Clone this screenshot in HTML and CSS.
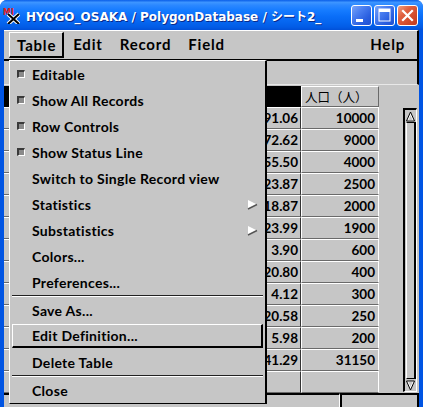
FILE: index.html
```html
<!DOCTYPE html>
<html>
<head>
<meta charset="utf-8">
<link rel="stylesheet" href="styles.css">
</head>
<body>
<div class="window">
  <div class="titlebar">
    <svg class="appicon" width="17" height="17" viewBox="0 0 17 17">
      <text x="0" y="8" class="icontext">MI</text>
      <path d="M5 7 L16 17 M16 7 L5 17" stroke="#fff" stroke-width="4" fill="none"/>
      <path d="M5 7 L16 17 M16 7 L5 17" stroke="#000" stroke-width="2" fill="none"/>
    </svg>
    <span class="title">HYOGO_OSAKA / PolygonDatabase / シート2_</span>
    <div class="tbtns">
      <span class="tbtn blue"><svg width="21" height="21" viewBox="0 0 21 21"><rect x="5" y="14" width="7" height="3" fill="#fff"/></svg></span>
      <span class="tbtn blue"><svg width="21" height="21" viewBox="0 0 21 21"><rect x="5" y="4" width="11" height="12" fill="none" stroke="#fff" stroke-width="1"/><rect x="5" y="4" width="11" height="3" fill="#fff"/></svg></span>
      <span class="tbtn red"><svg width="21" height="21" viewBox="0 0 21 21"><path d="M6 6 L15 15 M15 6 L6 15" stroke="#fff" stroke-width="2.2" stroke-linecap="square"/></svg></span>
    </div>
  </div>
  <div class="client">
    <div class="menubar">
      <span class="mitem active">Table</span>
      <span class="mitem">Edit</span>
      <span class="mitem">Record</span>
      <span class="mitem">Field</span>
      <span class="mitem help">Help</span>
    </div>
    <div class="field"></div>
    <div class="tablearea">
      <div class="grid">
        <div class="row head"><div class="c1 sel"></div><div class="c2 hcell">人口（人）</div></div>
        <div class="row"><div class="c1">91.06</div><div class="c2">10000</div></div>
        <div class="row"><div class="c1">72.62</div><div class="c2">9000</div></div>
        <div class="row"><div class="c1">55.50</div><div class="c2">4000</div></div>
        <div class="row"><div class="c1">23.87</div><div class="c2">2500</div></div>
        <div class="row"><div class="c1">18.87</div><div class="c2">2000</div></div>
        <div class="row"><div class="c1">23.99</div><div class="c2">1900</div></div>
        <div class="row"><div class="c1">3.90</div><div class="c2">600</div></div>
        <div class="row"><div class="c1">20.80</div><div class="c2">400</div></div>
        <div class="row"><div class="c1">4.12</div><div class="c2">300</div></div>
        <div class="row"><div class="c1">20.58</div><div class="c2">250</div></div>
        <div class="row"><div class="c1">5.98</div><div class="c2">200</div></div>
        <div class="row"><div class="c1">41.29</div><div class="c2">31150</div></div>
        <div class="row"><div class="c1"></div><div class="c2"></div></div>
      </div>
      <div class="scroll">
        <div class="sbtn"><svg width="9" height="11" viewBox="0 0 9 11"><path d="M4.5 1 L8.5 10 L0.5 10 Z" fill="#fff" stroke="#000" stroke-width="1"/><path d="M4.5 4 L6.5 9 L2.5 9 Z" fill="#c6c6c6"/></svg></div>
        <div class="strack"></div>
        <div class="sbtn"><svg width="9" height="11" viewBox="0 0 9 11"><path d="M0.5 1 L8.5 1 L4.5 10 Z" fill="#fff" stroke="#000" stroke-width="1"/><path d="M2.5 2 L6.5 2 L4.5 7 Z" fill="#c6c6c6"/></svg></div>
      </div>
    </div>
    <div class="status"><div class="pane p1"></div><div class="pane p2"></div></div>

    <div class="dropdown">
      <div class="ditem"><span class="ind"></span>Editable</div>
      <div class="ditem"><span class="ind"></span>Show All Records</div>
      <div class="ditem"><span class="ind"></span>Row Controls</div>
      <div class="ditem"><span class="ind"></span>Show Status Line</div>
      <div class="ditem plain">Switch to Single Record view</div>
      <div class="ditem plain sub">Statistics<svg class="arrow" width="11" height="11" viewBox="0 0 11 11"><path d="M1 1 L10 5.5 L1 10 Z" fill="#fff"/><path d="M10 5.5 L1 10" stroke="#555" stroke-width="1.4"/></svg></div>
      <div class="ditem plain sub">Substatistics<svg class="arrow" width="11" height="11" viewBox="0 0 11 11"><path d="M1 1 L10 5.5 L1 10 Z" fill="#fff"/><path d="M10 5.5 L1 10" stroke="#555" stroke-width="1.4"/></svg></div>
      <div class="ditem plain">Colors...</div>
      <div class="ditem plain">Preferences...</div>
      <div class="sep"></div>
      <div class="ditem plain">Save As...</div>
      <div class="ditem plain hl"><span class="hlbox">Edit Definition...</span></div>
      <div class="ditem plain">Delete Table</div>
      <div class="sep"></div>
      <div class="ditem plain">Close</div>
    </div>
  </div>
</div>
</body>
</html>
```
FILE: styles.css
```css
* { box-sizing: border-box; }
html, body { margin: 0; padding: 0; }
body { width: 423px; height: 407px; overflow: hidden; background: #fff; }

.window {
  width: 423px; height: 407px;
  background: #0054e3;
  display: flex; flex-direction: column;
  border-radius: 7px 7px 0 0;
}

.titlebar {
  height: 30px;
  flex: none;
  display: flex; align-items: center;
  padding: 0 5px 0 3px;
  border-radius: 7px 7px 0 0;
  background: linear-gradient(to bottom, #0a5ee8 0%, #3d95ff 8%, #2a87ff 18%, #157bff 35%, #0a6ef8 55%, #0565ef 75%, #025ce6 90%, #0150d8 100%);
}
.appicon { flex: none; margin-top: 1px; }
.icontext { font-family: "DejaVu Sans", sans-serif; font-weight: bold; font-size: 8px; fill: #e0201a; }
.title {
  margin-left: 6px;
  color: #fff;
  font-family: "DejaVu Sans", "Noto Sans CJK JP", sans-serif;
  font-weight: bold;
  font-size: 12px;
  text-shadow: 1px 1px 0 #0a2a8a;
  white-space: nowrap;
  flex: 1;
}
.tbtns { display: flex; gap: 2px; flex: none; }
.tbtn {
  width: 21px; height: 21px;
  border: 1px solid #fff;
  border-radius: 3px;
  display: block;
  overflow: hidden;
}
.tbtn svg { display: block; margin: -1px; }
.tbtn.blue { background: linear-gradient(135deg, #7aa4f8 0%, #4a7ef0 35%, #2a5fe0 70%, #2050d0 100%); }
.tbtn.red { background: linear-gradient(135deg, #f0a080 0%, #e06040 35%, #d04a2a 70%, #c03a20 100%); }

.client {
  flex: 1;
  margin: 0 4px 4px 4px;
  background: #c6c6c6;
  display: flex; flex-direction: column;
  position: relative;
  font-family: "Lato", "DejaVu Sans", sans-serif;
  font-weight: bold;
  color: #000;
}

.menubar {
  height: 31px;
  flex: none;
  display: flex; align-items: center;
  padding-left: 5px;
  padding-right: 5px;
  border-top: 1px solid #fff;
  border-bottom: 2px solid #000;
  border-right: 2px solid #000;
  font-size: 15px;
  letter-spacing: 0.8px;
}
.mitem {
  height: 26px;
  line-height: 24px;
  padding: 0 8px 0 9px;
}
.mitem.active {
  padding: 0 6px 0 7px;
  border-style: solid;
  border-width: 1px 2px 2px 1px;
  border-color: #fff #000 #000 #fff;
}
.mitem.help { margin-left: auto; padding-right: 7px; }

.field {
  height: 24px;
  flex: none;
  border-right: 2px solid #000;
  border-bottom: 1px solid #e8e8e8;
}

.tablearea {
  flex: 1;
  display: flex;
  overflow: hidden;
  min-height: 0;
}
.grid { flex: none; width: 376px; overflow: hidden; }
.row { display: flex; height: 22px; }
.row.head { height: 21px; margin-top: 1px; }
.c1 {
  width: 297px;
  text-align: right;
  padding-right: 2px;
  font-size: 13.5px;
  line-height: 20px;
  border-top: 1px solid #fff;
  border-bottom: 1px solid #6a6a6a;
  border-right: 1px solid #333;
}
.c1.sel { background: #000; border: none; }
.c2 {
  width: 78px;
  text-align: right;
  padding-right: 3px;
  font-size: 13.5px;
  line-height: 20px;
  border-top: 1px solid #fff;
  border-left: 1px solid #fff;
  border-right: 1px solid #fff;
  border-bottom: 1px solid #6a6a6a;
}
.c2.hcell {
  text-align: left;
  padding-left: 3px;
  font-family: "Noto Sans CJK JP", sans-serif;
  font-weight: normal;
  font-size: 12.5px;
  line-height: 19px;
  border-right: 1px solid #6a6a6a;
}

.scroll {
  flex: none;
  width: 14px;
  margin: 23px 0 1px 23px;
  border-left: 2px solid #000;
  border-top: 2px solid #000;
  border-right: 1px solid #fff;
  border-bottom: 1px solid #fff;
  display: flex; flex-direction: column;
}
.sbtn {
  height: 12px;
  flex: none;
  display: flex; justify-content: center; align-items: center;
}
.strack {
  flex: 1;
  border-top: 1px solid #000;
  border-bottom: 1px solid #000;
  border-left: 1px solid #fff;
  border-right: 2px solid #000;
  margin: 0 0 0 1px;
}

.status {
  height: 26px;
  flex: none;
  display: flex;
}
.pane {
  border-top: 2px solid #000;
}
.p1 { width: 336px; border-right: 1px solid #fff; }
.p2 { flex: 1; border-left: 2px solid #000; border-right: 2px solid #000; }

.dropdown {
  position: absolute;
  left: 5px; top: 30px;
  width: 258px;
  border-top: 1px solid #fff;
  border-left: 1px solid #fff;
  border-right: 2px solid #000;
  border-bottom: 1px solid #000;
  background: #c6c6c6;
  font-size: 14px;
  letter-spacing: 0.3px;
}
.ditem {
  height: 26px;
  display: flex; align-items: center;
  white-space: nowrap;
}
.ditem.plain { padding-left: 22px; }
.ind {
  width: 8px; height: 8px;
  margin: 0 7px 0 7px;
  border-style: solid;
  border-width: 2px 1px 1px 2px;
  border-color: #3a3a3a #fff #fff #3a3a3a;
  background: #8a8a8a;
  flex: none;
}
.ditem.sub .arrow { margin-left: auto; margin-right: 7px; }
.sep {
  height: 2px;
  margin: 0 2px;
  border-top: 1px solid #222;
  border-bottom: 1px solid #fff;
}
.ditem.hl { padding: 1px 2px 1px 2px; }
.hlbox {
  flex: 1;
  height: 24px;
  display: flex; align-items: center;
  padding-left: 19px;
  border-style: solid;
  border-width: 1px 2px 2px 1px;
  border-color: #fff #000 #000 #fff;
}
```
